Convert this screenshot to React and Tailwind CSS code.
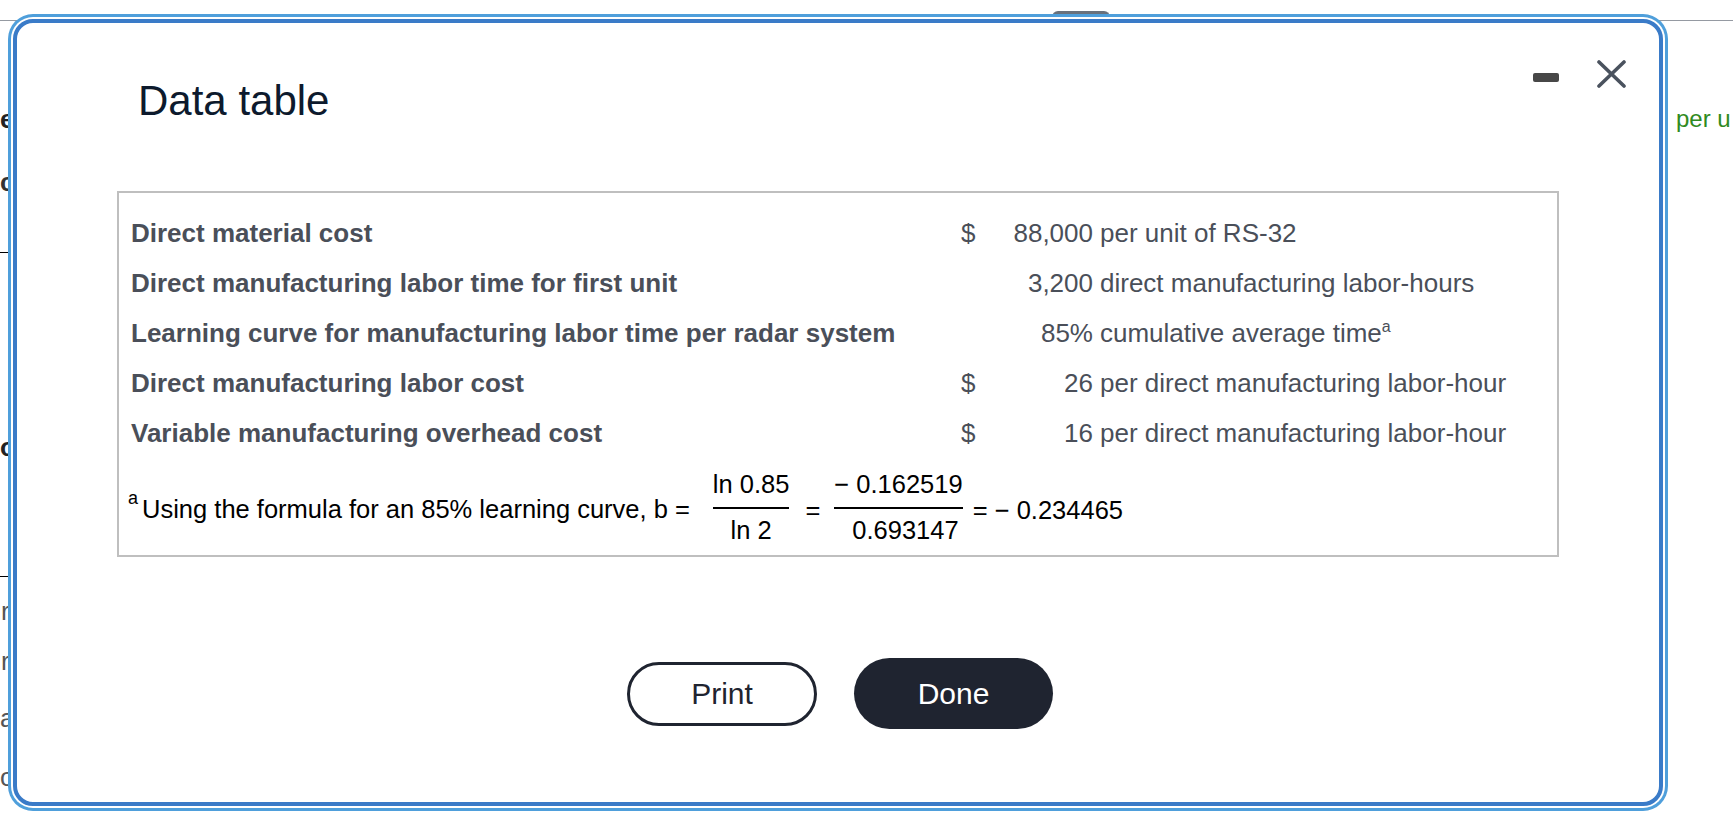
import React from 'react';

const rows = [
  { label: 'Direct material cost', dollar: true, num: '88,000', text: 'per unit of RS-32' },
  { label: 'Direct manufacturing labor time for first unit', dollar: false, num: '3,200', text: 'direct manufacturing labor-hours' },
  { label: 'Learning curve for manufacturing labor time per radar system', dollar: false, num: '85%', text: 'cumulative average time', sup: 'a' },
  { label: 'Direct manufacturing labor cost', dollar: true, num: '26', text: 'per direct manufacturing labor-hour' },
  { label: 'Variable manufacturing overhead cost', dollar: true, num: '16', text: 'per direct manufacturing labor-hour' },
];

const Fraction = ({ top, bottom, padX, bottomClass = '' }) => (
  <div className={`flex flex-col items-center ${padX}`}>
    <div className="leading-[26px] pb-[10px] whitespace-nowrap">{top}</div>
    <div className="h-[2px] w-full bg-black" />
    <div className={`leading-[26px] pt-[8px] whitespace-nowrap ${bottomClass}`}>{bottom}</div>
  </div>
);

const Fragment = ({ children, className }) => (
  <div className={`whitespace-nowrap h-[30px] leading-[30px] text-[26px] ${className}`}>
    {children}
  </div>
);

const App = () => {
  return (
    <div className="relative h-[817px] w-full overflow-hidden bg-white font-['Liberation_Sans',Arial,sans-serif]">
      {/* page behind the dialog */}
      <div className="flex flex-col">
        <div className="h-[20px]">
          <div className="ml-[1052px] mt-[11px] w-[58px] h-[9px] border-t-[3px] border-x-[3px] border-[#69717c] rounded-t-[6px]" />
        </div>
        <div className="h-px bg-[#959aa2]" />
        <div className="flex">
          <div className="w-[30px] flex flex-col">
            <Fragment className="mt-[83px] font-bold text-[#222]">eg</Fragment>
            <Fragment className="mt-[33px] font-bold text-[#333]">cu</Fragment>
            <div className="mt-[55px] h-px w-[12px] bg-black" />
            <Fragment className="mt-[179px] font-bold text-[#222]">ov</Fragment>
            <div className="mt-[114px] h-px w-[12px] bg-black" />
            <Fragment className="mt-[19px] pl-px text-[#555]">r</Fragment>
            <Fragment className="mt-[20px] pl-px text-[#555]">r</Fragment>
            <Fragment className="mt-[27px] text-[#555]">ai</Fragment>
            <Fragment className="mt-[29px] text-[#555]">ot</Fragment>
          </div>
          <div className="flex-1" />
          <div className="w-[57px]">
            <div className="mt-[83px] h-[30px] leading-[30px] text-[24px] text-[#2f8a21] whitespace-nowrap">per u</div>
          </div>
        </div>
      </div>

      {/* dialog */}
      <div className="absolute left-[13px] top-[19px] w-[1650px] h-[787px] border-4 border-[#3a7bc8] rounded-[20px] bg-white shadow-[0_0_0_2px_#ffffff,0_0_0_5px_#4f9fdb] flex flex-col">
        <div className="flex items-start pt-[37px] pl-[121px] pr-[33px]">
          <h2 className="mt-[17px] text-[42px] leading-[48px] text-[#0d1a2d]">Data table</h2>
          <div className="ml-auto flex items-start gap-[38px]">
            <div className="mt-[13px] w-[26px] h-[9px] rounded-[2px] bg-[#474747]" />
            <svg width="29" height="28" viewBox="0 0 29 28">
              <path d="M2 2 L27 26 M27 2 L2 26" stroke="#4a525e" strokeWidth="3.6" strokeLinecap="round" fill="none" />
            </svg>
          </div>
        </div>

        <div className="mx-[100px] mt-[66px] border-2 border-[#bfbfbf] pt-[15px] pb-[12px]">
          {rows.map((r) => (
            <div key={r.label} className="grid grid-cols-[842px_20px_112px_1fr] h-[50px] items-center text-[26px] text-[#4a4f59] whitespace-nowrap">
              <div className="pl-[12px] font-bold">{r.label}</div>
              <div>{r.dollar ? '$' : ''}</div>
              <div className="text-right">{r.num}</div>
              <div className="pl-[7px]">
                {r.text}
                {r.sup && <span className="relative -top-[10px] text-[16px]">{r.sup}</span>}
              </div>
            </div>
          ))}

          <div className="mt-[13px] pl-[9px] flex items-center text-[25.5px] text-black">
            <span className="mt-[6px] whitespace-nowrap leading-[30px]">
              <span className="relative -top-[14px] text-[18px] mr-[4px]">a</span>
              Using the formula for an 85% learning curve, b =
            </span>
            <div className="ml-[8px]">
              <Fraction top="ln 0.85" bottom="ln 2" padX="pl-[15px] pr-[11px]" />
            </div>
            <span className="mt-[6px] mx-[5px] leading-[30px]">=</span>
            <Fraction top={'\u2212 0.162519'} bottom="0.693147" padX="px-[9px]" bottomClass="pl-[14px]" />
            <span className="mt-[6px] ml-px leading-[30px] whitespace-nowrap">= {'\u2212'} 0.234465</span>
          </div>
        </div>

        <div className="mt-[101px] pl-[4px] flex justify-center items-center gap-[37px]">
          <button className="w-[190px] h-[64px] rounded-full border-[3px] border-[#1f2430] bg-white text-[30px] text-[#1f2430]">
            Print
          </button>
          <button className="w-[199px] h-[71px] rounded-full bg-[#1f2430] text-[30px] text-white">
            Done
          </button>
        </div>
      </div>
    </div>
  );
};

export default App;
